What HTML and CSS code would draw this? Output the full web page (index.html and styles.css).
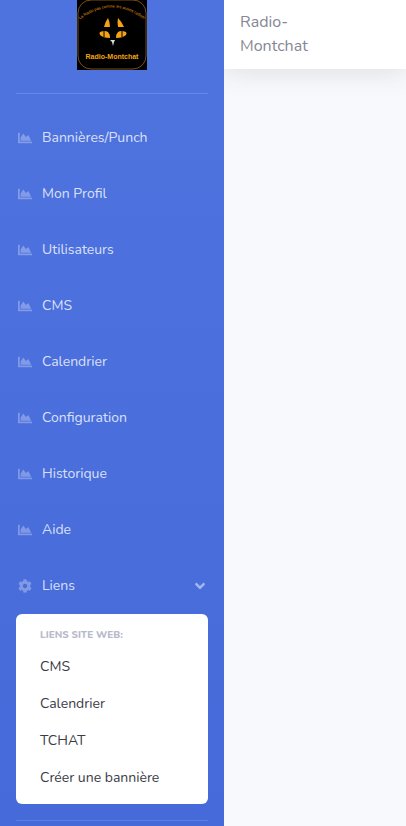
FILE: index.html
```html
<!DOCTYPE html>
<html lang="fr">
<head>
    <meta charset="UTF-8">
    <meta name="viewport" content="width=device-width, initial-scale=1.0">
    <title>Radio-Montchat</title>
    <link rel="stylesheet" href="styles.css">
</head>
<body>

    <!-- Shared icons -->
    <svg class="sprite" aria-hidden="true">
        <symbol id="chart" viewBox="0 0 512 512">
            <path d="M500 384c6.6 0 12 5.4 12 12v40c0 6.6-5.4 12-12 12H12c-6.6 0-12-5.4-12-12V76c0-6.6 5.4-12 12-12h40c6.6 0 12 5.4 12 12v308h436zM372.7 159.5L288 216l-85.3-113.7c-5.1-6.8-15.5-6.3-19.9 1L96 248v104h384l-89.9-187.8c-3.2-6.5-11.4-8.7-17.4-4.7z"/>
        </symbol>
        <symbol id="cog" viewBox="0 0 512 512">
            <path d="M487.4 315.7l-42.6-24.6c4.3-23.2 4.3-47 0-70.2l42.6-24.6c4.9-2.8 7.1-8.6 5.5-14-11.1-35.6-30-67.8-54.7-94.6-3.8-4.1-10-5.1-14.8-2.3L380.8 110c-17.9-15.4-38.5-27.3-60.8-35.1V25.8c0-5.6-3.9-10.5-9.4-11.7-36.7-8.2-74.3-7.8-109.2 0-5.5 1.2-9.4 6.1-9.4 11.7V75c-22.2 7.9-42.8 19.8-60.8 35.1L88.7 85.5c-4.9-2.8-11-1.9-14.8 2.3-24.7 26.7-43.6 58.9-54.7 94.6-1.7 5.4.6 11.2 5.5 14L67.3 221c-4.3 23.2-4.3 47 0 70.2l-42.6 24.6c-4.9 2.8-7.1 8.6-5.5 14 11.1 35.6 30 67.8 54.7 94.6 3.8 4.1 10 5.1 14.8 2.3l42.6-24.6c17.9 15.4 38.5 27.3 60.8 35.1v49.2c0 5.6 3.9 10.5 9.4 11.7 36.7 8.2 74.3 7.8 109.2 0 5.5-1.2 9.4-6.1 9.4-11.7v-49.2c22.2-7.9 42.8-19.8 60.8-35.1l42.6 24.6c4.9 2.8 11 1.9 14.8-2.3 24.7-26.7 43.6-58.9 54.7-94.6 1.5-5.5-.7-11.3-5.6-14.1zM256 336c-44.1 0-80-35.9-80-80s35.9-80 80-80 80 35.9 80 80-35.9 80-80 80z"/>
        </symbol>
        <symbol id="angle" viewBox="0 0 320 512">
            <path d="M143 352.3L7 216.3c-9.4-9.4-9.4-24.6 0-33.9l22.6-22.6c9.4-9.4 24.6-9.4 33.9 0l96.4 96.4 96.4-96.4c9.4-9.4 24.6-9.4 33.9 0l22.6 22.6c9.4 9.4 9.4 24.6 0 33.9l-136 136c-9.2 9.4-24.4 9.4-33.8 0z"/>
        </symbol>
    </svg>

    <!-- Sidebar -->
    <nav class="sidebar">
        <a class="brand" href="#" aria-label="Radio-Montchat">
            <svg class="logo" viewBox="0 0 70 70">
                <rect width="70" height="70" fill="#000"/>
                <rect x="1" y="0" width="68" height="69" rx="13" fill="none" stroke="#7a4f0a"/>
                <path id="arc" d="M1 21Q35 -6 69 21" fill="none"/>
                <text class="logo-motto" text-anchor="middle"><textPath href="#arc" startOffset="50%">La Radio pas comme les autres radios!</textPath></text>
                <g fill="#f5a314">
                    <path d="M31 18q2 4 2 9h-6q1-5 4-9zM41 18q4 4 6 9h-6q-1-5 0-9z"/>
                    <path d="M23 32q5-2 8 0 2 2 2 6-7 0-10-3-1-2 0-3zM49 32q-5-2-8 0-2 2-2 6 7 0 10-3 1-2 0-3z"/>
                </g>
                <path d="M27 31v6M45 31v6" stroke="#000"/>
                <path d="M33 40h5l-1 2-1 4-1-4z" fill="#ddd"/>
                <text class="logo-name" x="35" y="59" text-anchor="middle">Radio-Montchat</text>
            </svg>
        </a>

        <hr class="divider">

        <ul class="menu">
            <li><a class="nav-link" href="#"><svg class="icon"><use href="#chart"/></svg>Bannières/Punch</a></li>
            <li><a class="nav-link" href="#"><svg class="icon"><use href="#chart"/></svg>Mon Profil</a></li>
            <li><a class="nav-link" href="#"><svg class="icon"><use href="#chart"/></svg>Utilisateurs</a></li>
            <li><a class="nav-link" href="#"><svg class="icon"><use href="#chart"/></svg>CMS</a></li>
            <li><a class="nav-link" href="#"><svg class="icon"><use href="#chart"/></svg>Calendrier</a></li>
            <li><a class="nav-link" href="#"><svg class="icon"><use href="#chart"/></svg>Configuration</a></li>
            <li><a class="nav-link" href="#"><svg class="icon"><use href="#chart"/></svg>Historique</a></li>
            <li><a class="nav-link" href="#"><svg class="icon"><use href="#chart"/></svg>Aide</a></li>
            <li>
                <button class="nav-link" type="button" aria-expanded="true" aria-controls="liens">
                    <svg class="icon"><use href="#cog"/></svg>Liens
                    <svg class="arrow"><use href="#angle"/></svg>
                </button>
                <div class="submenu" id="liens">
                    <h6>Liens site web:</h6>
                    <a href="#">CMS</a>
                    <a href="#">Calendrier</a>
                    <a href="#">TCHAT</a>
                    <a href="#">Créer une bannière</a>
                </div>
            </li>
        </ul>

        <hr class="divider">
    </nav>

    <!-- Main Content -->
    <main class="content">
        <header class="topbar">
            <span class="site-name">Radio-Montchat</span>
        </header>
    </main>

    <script>
        // Open and close the links panel
        const toggle = document.querySelector('button.nav-link');
        toggle.addEventListener('click', () => {
            const panel = document.getElementById('liens');
            panel.hidden = !panel.hidden;
            toggle.setAttribute('aria-expanded', String(!panel.hidden));
        });
    </script>

</body>
</html>
```
FILE: styles.css
```css
* {
    box-sizing: border-box;
}

body {
    display: flex;
    min-height: 100vh;
    margin: 0;
    font-family: Nunito, Lato, sans-serif;
    font-size: 16px;
    line-height: 24px;
    color: #858796;
    background-color: #f8f9fc;
}

.sprite {
    display: none;
}

/* Sidebar */
.sidebar {
    flex: 0 0 224px;
    background: linear-gradient(180deg, #4e73df 10%, #466ad9 100%);
}

.brand {
    display: flex;
    justify-content: center;
    margin-bottom: 23px;
}

.logo {
    width: 70px;
    height: 70px;
}

.logo-name {
    font: bold 7px "Liberation Sans", sans-serif;
    fill: #f5a314;
}

.logo-motto {
    font: 4px "Liberation Sans", sans-serif;
    fill: #e0960f;
}

.divider {
    height: 1px;
    margin: 0 16px;
    border: 0;
    background-color: rgba(255, 255, 255, 0.15);
}

.menu {
    margin: 16px 0;
    padding: 0;
    list-style: none;
}

.nav-link {
    display: flex;
    align-items: center;
    gap: 10px;
    width: 100%;
    padding: 16px 18px;
    border: 0;
    background: none;
    font-family: inherit;
    font-size: 14px;
    line-height: 24px;
    color: rgba(255, 255, 255, 0.8);
    text-decoration: none;
    cursor: pointer;
}

.nav-link:hover {
    color: #fff;
}

.icon {
    width: 14px;
    height: 14px;
    fill: rgba(255, 255, 255, 0.3);
}

.arrow {
    width: 12px;
    height: 16px;
    margin-left: auto;
    fill: rgba(255, 255, 255, 0.5);
}

/* Links panel */
.submenu {
    margin: 0 16px;
    padding: 8px 0;
    border-radius: 6px;
    background-color: #fff;
}

.submenu h6 {
    margin: 0;
    padding: 5px 24px;
    font-size: 10px;
    font-weight: 800;
    line-height: 16px;
    text-transform: uppercase;
    color: #b7b9cc;
}

.submenu a {
    display: block;
    padding: 8px 24px;
    font-size: 14px;
    line-height: 21px;
    color: #3a3b45;
    text-decoration: none;
}

.submenu a:hover {
    background-color: #eaecf4;
}

/* Main Content */
.content {
    flex: 1;
    overflow: hidden;
}

.topbar {
    padding: 10px 16px 11px;
    background-color: #fff;
    box-shadow: 0 2px 28px rgba(58, 59, 69, 0.15);
}

.site-name {
    display: block;
    max-width: 80px;
}
```
